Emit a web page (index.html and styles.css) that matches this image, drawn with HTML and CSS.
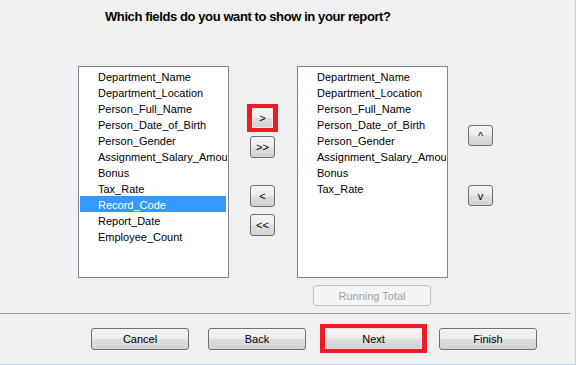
FILE: index.html
```html
<!DOCTYPE html>
<html lang="en">
<head>
    <meta charset="UTF-8">
    <title>Report Wizard - Fields</title>
    <link rel="stylesheet" href="styles.css">
</head>
<body>
    <div class="wizard">
        <h1 class="title">Which fields do you want to show in your report?</h1>
        <div class="main">
            <ul class="field-list">
                <li>Department_Name</li>
                <li>Department_Location</li>
                <li>Person_Full_Name</li>
                <li>Person_Date_of_Birth</li>
                <li>Person_Gender</li>
                <li>Assignment_Salary_Amount</li>
                <li>Bonus</li>
                <li>Tax_Rate</li>
                <li class="selected">Record_Code</li>
                <li>Report_Date</li>
                <li>Employee_Count</li>
            </ul>
            <div class="move-buttons">
                <span class="highlight"><button class="btn btn-small btn-inner">&gt;</button></span>
                <button class="btn btn-small btn-all">&gt;&gt;</button>
                <button class="btn btn-small btn-back">&lt;</button>
                <button class="btn btn-small btn-all">&lt;&lt;</button>
            </div>
            <div class="chosen">
                <ul class="field-list">
                    <li>Department_Name</li>
                    <li>Department_Location</li>
                    <li>Person_Full_Name</li>
                    <li>Person_Date_of_Birth</li>
                    <li>Person_Gender</li>
                    <li>Assignment_Salary_Amount</li>
                    <li>Bonus</li>
                    <li>Tax_Rate</li>
                </ul>
                <button class="btn btn-running" disabled>Running Total</button>
            </div>
            <div class="order-buttons">
                <button class="btn btn-order">^</button>
                <button class="btn btn-order btn-down">v</button>
            </div>
        </div>
        <hr class="separator">
        <div class="footer">
            <button class="btn btn-nav">Cancel</button>
            <button class="btn btn-nav">Back</button>
            <span class="highlight highlight-nav"><button class="btn btn-nav btn-next">Next</button></span>
            <button class="btn btn-nav">Finish</button>
        </div>
    </div>
</body>
</html>
```

FILE: styles.css
```css
body {
    margin: 0;
    background-color: #f0f0f0;
    font-family: "Liberation Sans", Arial, sans-serif;
    font-size: 11px;
    color: #000;
}
.wizard {
    box-sizing: border-box;
    width: 576px;
    height: 365px;
    border-right: 1px solid #bcd3ee;
    border-bottom: 1px solid #bcd3ee;
    overflow: hidden;
}
.title {
    margin: 0;
    padding: 9px 0 0 105px;
    height: 16px;
    font-size: 13px;
    line-height: 16px;
    font-weight: bold;
    letter-spacing: -0.4px;
}
.main {
    display: flex;
    align-items: flex-start;
    margin-top: 41px;
    padding-left: 78px;
    height: 240px;
}
.field-list {
    box-sizing: border-box;
    width: 151px;
    height: 212px;
    margin: 0;
    padding: 1px;
    list-style: none;
    background-color: white;
    border: 1px solid #828790;
    overflow: hidden;
}
.field-list li {
    height: 15px;
    padding: 1px 0 0 18px;
    line-height: 16px;
    white-space: nowrap;
    overflow: hidden;
}
.field-list li.selected {
    background-color: #3399ff;
    color: white;
    margin-right: 1px;
}
.btn {
    box-sizing: border-box;
    padding: 0;
    font-family: "Liberation Sans", Arial, sans-serif;
    font-size: 11px;
    color: #000;
    border: 1px solid #707070;
    border-radius: 3px;
    background: linear-gradient(to bottom, #f4f4f4 0%, #ececec 48%, #dedede 52%, #d3d3d3 100%);
}
.btn:disabled {
    color: #a0a0a0;
    border-color: #c0c0c0;
    background: #f4f4f4;
}
.move-buttons {
    display: flex;
    flex-direction: column;
    align-items: center;
    width: 31px;
    margin-left: 18px;
    padding-top: 38px;
}
.btn-small {
    width: 25px;
    height: 22px;
}
.highlight {
    display: flex;
    justify-content: center;
    align-items: center;
    box-sizing: border-box;
    width: 31px;
    height: 28px;
    border: 4px solid #ed1c24;
    background-color: #ed1c24;
}
.btn-inner {
    width: 21px;
    height: 20px;
    border-radius: 0;
    border-color: #e8e8e8;
}
.move-buttons .btn-all {
    margin-top: 4px;
}
.move-buttons .btn-back {
    margin-top: 27px;
}
.move-buttons .btn-back + .btn-all {
    margin-top: 7px;
}
.chosen {
    display: flex;
    flex-direction: column;
    margin-left: 19px;
}
.btn-running {
    width: 118px;
    height: 21px;
    margin: 7px 0 0 16px;
}
.order-buttons {
    display: flex;
    flex-direction: column;
    margin-left: 20px;
    padding-top: 59px;
}
.btn-order {
    width: 25px;
    height: 21px;
}
.btn-down {
    margin-top: 39px;
}
.separator {
    width: 570px;
    margin: 7px 0 0 0;
    border: none;
    border-top: 1px solid #a0a0a0;
}
.footer {
    display: flex;
    align-items: center;
    margin-top: 10px;
    padding-left: 91px;
}
.btn-nav {
    width: 98px;
    height: 22px;
    margin-right: 19px;
}
.highlight-nav {
    width: 107px;
    height: 29px;
    margin: 0 12px 0 -5px;
}
.btn-next {
    width: 97px;
    height: 21px;
    margin: 0;
    border-radius: 0;
    border-color: #e0e0e0;
}
```
